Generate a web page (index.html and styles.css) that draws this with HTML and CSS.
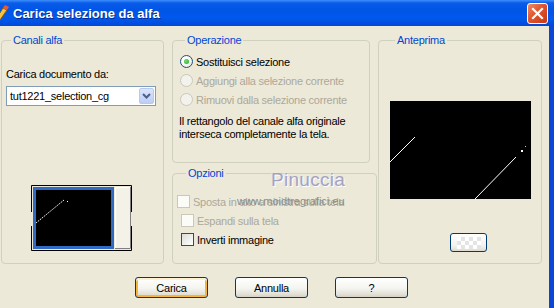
FILE: index.html
```html
<!DOCTYPE html>
<html lang="it">
<head>
    <meta charset="UTF-8">
    <title>Carica selezione da alfa</title>
    <link rel="stylesheet" href="styles.css">
</head>
<body>
    <div class="window">
        <div class="titlebar">
            <svg class="app-icon" width="16" height="16" viewBox="0 0 16 16">
                <path d="M2 14 L9 3 L13 5 L6 15 Z" fill="#f4c542" stroke="#8a5a10" stroke-width="1"/>
                <path d="M9 3 L11 0 L15 2 L13 5 Z" fill="#e85a3a"/>
                <circle cx="4" cy="12" r="2" fill="#5cb85c"/>
            </svg>
            <span class="title">Carica selezione da alfa</span>
            <div class="close-btn">
                <svg width="13" height="13" viewBox="0 0 13 13">
                    <path d="M2 2 L11 11 M11 2 L2 11" stroke="#fff" stroke-width="2.2" stroke-linecap="square"/>
                </svg>
            </div>
        </div>

        <div class="client">
            <div class="groups">
                <fieldset class="group group-channels">
                    <legend>Canali alfa</legend>
                    <div class="field-label">Carica documento da:</div>
                    <div class="combo">
                        <span class="combo-text">tut1221_selection_cg</span>
                        <span class="combo-btn">
                            <svg width="15" height="16" viewBox="0 0 15 16">
                                <path d="M4 6 L7.5 9.5 L11 6" fill="none" stroke="#4d6185" stroke-width="2"/>
                            </svg>
                        </span>
                    </div>
                    <svg class="thumb" width="102" height="66" viewBox="0 0 102 66">
                        <path d="M0.5 27 V0.5 H100.5 V27 M0.5 41 V65.5 H100.5 V41" fill="none" stroke="#000"/>
                        <path d="M98 27 H100 M98 41 H100" stroke="#000"/>
                        <rect x="2" y="2" width="81" height="62" fill="#316ac5"/>
                        <rect x="5" y="5" width="75" height="56" fill="#000"/>
                        <path d="M5 38 L33 15" stroke="#fff" stroke-width="1" stroke-dasharray="1.5 1"/>
                        <rect x="36" y="16" width="1" height="1" fill="#fff"/>
                        <rect x="84" y="2" width="16" height="62" fill="#f3f1e8"/>
                        <path d="M84.5 64 V2.5 H100" fill="none" stroke="#fff"/>
                        <path d="M84 63.5 H99.5 V2" fill="none" stroke="#808080"/>
                    </svg>
                </fieldset>

                <div class="middle-col">
                    <fieldset class="group group-op">
                        <legend>Operazione</legend>
                        <div class="option-row">
                            <span class="radio checked"></span>
                            <span>Sostituisci selezione</span>
                        </div>
                        <div class="option-row disabled">
                            <span class="radio"></span>
                            <span>Aggiungi alla selezione corrente</span>
                        </div>
                        <div class="option-row disabled">
                            <span class="radio"></span>
                            <span>Rimuovi dalla selezione corrente</span>
                        </div>
                        <p class="op-note">Il rettangolo del canale alfa originale interseca completamente la tela.</p>
                    </fieldset>

                    <fieldset class="group group-opts">
                        <legend>Opzioni</legend>
                        <div class="option-row disabled first-check">
                            <span class="check"></span>
                            <span>Sposta in alto a sinistra sulla tela</span>
                            <span class="watermark">Pinuccia</span>
                            <span class="watermark-url">www.moidtregrafici.eu</span>
                        </div>
                        <div class="option-row disabled">
                            <span class="check"></span>
                            <span>Espandi sulla tela</span>
                        </div>
                        <div class="option-row">
                            <span class="check"></span>
                            <span>Inverti immagine</span>
                        </div>
                    </fieldset>
                </div>

                <fieldset class="group group-preview">
                    <legend>Anteprima</legend>
                    <svg class="preview" width="141" height="98" viewBox="0 0 141 98">
                        <rect width="141" height="98" fill="#000"/>
                        <path d="M0 61 L25 36" stroke="#fff" stroke-width="1"/>
                        <path d="M85 98 L126 56" stroke="#fff" stroke-width="1"/>
                        <rect x="131" y="49" width="2" height="2" fill="#fff"/>
                        <rect x="135" y="45" width="1" height="1" fill="#ccc"/>
                    </svg>
                    <div class="bg-btn"><span class="checker"></span></div>
                </fieldset>
            </div>

            <div class="buttons">
                <button class="btn btn-default">Carica</button>
                <button class="btn">Annulla</button>
                <button class="btn">?</button>
            </div>
        </div>
    </div>
</body>
</html>
```

FILE: styles.css
```css
html, body {
    margin: 0;
    padding: 0;
}

body {
    width: 554px;
    height: 308px;
    overflow: hidden;
    background: #ece9d8;
    font-family: "Liberation Sans", Arial, sans-serif;
    font-size: 11px;
    color: #000;
}

.window {
    display: flex;
    flex-direction: column;
    height: 308px;
}

.titlebar {
    height: 26px;
    display: flex;
    align-items: center;
    background: linear-gradient(#3d8ffc 0, #0a5ce9 3px, #0055e5 10px, #0058ee 18px, #0049d9 26px);
}

.app-icon {
    margin-left: -6px;
    flex: none;
}

.title {
    margin-left: 3px;
    color: #fff;
    font-weight: bold;
    font-size: 13px;
    text-shadow: 1px 1px 0 #0a2a8a;
}

.close-btn {
    margin-left: auto;
    margin-right: 6px;
    width: 19px;
    height: 19px;
    border: 1px solid #fff;
    border-radius: 3px;
    background: linear-gradient(135deg, #f08a66 0%, #e0542d 45%, #c53a17 100%);
    display: flex;
    align-items: center;
    justify-content: center;
}

.client {
    flex: 1;
    width: 548px;
    border-right: 6px solid #0a47d6;
    padding: 8px 0 0 1px;
    box-sizing: content-box;
    letter-spacing: -0.25px;
}

.groups {
    display: flex;
    height: 230px;
}

.group {
    margin: 0;
    padding: 0;
    min-width: 0;
    border: 1px solid #d0d0bf;
    border-radius: 4px;
    box-sizing: border-box;
}

.group legend {
    margin-left: 5px;
    padding: 0 2px;
    line-height: 13px;
    color: #0046d5;
}

.group-channels {
    width: 163px;
    padding: 21px 0 0 4px;
}

.field-label {
    line-height: 13px;
}

.combo {
    margin-top: 5px;
    width: 150px;
    height: 20px;
    box-sizing: border-box;
    border: 1px solid #7f9db9;
    background: #fff;
    display: flex;
    align-items: center;
}

.combo-text {
    flex: 1;
    padding-left: 3px;
}

.combo-btn {
    width: 15px;
    height: 16px;
    margin-right: 1px;
    border-radius: 2px;
    background: linear-gradient(#dbe5fb, #bccdf6);
    border: 1px solid #b6c9f2;
    box-sizing: border-box;
    display: flex;
    align-items: center;
    justify-content: center;
}

.combo-btn svg {
    flex: none;
}

.thumb {
    display: block;
    margin: 79px 0 0 25px;
}

.middle-col {
    margin-left: 8px;
    width: 205px;
    display: flex;
    flex-direction: column;
}

.group-op {
    width: 198px;
    height: 129px;
    padding: 5px 0 0 7px;
}

.option-row {
    height: 19px;
    display: flex;
    align-items: center;
    gap: 3px;
}

.option-row.disabled {
    color: #aca899;
}

.radio {
    width: 13px;
    height: 13px;
    box-sizing: border-box;
    border-radius: 50%;
    border: 1px solid #cac8bb;
    background: #f3f2ec;
    flex: none;
    display: flex;
    align-items: center;
    justify-content: center;
}

.radio.checked {
    border-color: #1c5180;
    background: radial-gradient(circle at 35% 35%, #fff 30%, #dcdcd5 100%);
}

.radio.checked::after {
    content: "";
    width: 5px;
    height: 5px;
    border-radius: 50%;
    background: radial-gradient(circle at 40% 40%, #76e06f, #21a121);
}

.op-note {
    margin: 6px 0 0 -1px;
    line-height: 13px;
    width: 185px;
}

.group-opts {
    flex: 1;
    margin-top: 4px;
    padding: 12px 0 0 8px;
}

.check {
    width: 13px;
    height: 13px;
    box-sizing: border-box;
    border: 1px solid #1c5180;
    background: linear-gradient(135deg, #dcdcd7, #fff);
    flex: none;
}

.disabled .check {
    border-color: #cac8bb;
    background: #fbfbf8;
}

.first-check {
    position: relative;
    margin-left: -4px;
}

.watermark {
    position: absolute;
    left: 94px;
    top: -22px;
    font-family: "Liberation Sans", Arial, sans-serif;
    font-size: 19px;
    line-height: 20px;
    letter-spacing: 0.3px;
    color: #a3a3c0;
    text-shadow: 1px 1px 0 #fff, -1px 0 0 #e6e6ee;
}

.watermark-url {
    position: absolute;
    left: 60px;
    top: 0;
    line-height: 19px;
    color: #8d8d8d;
    letter-spacing: 0;
}

.group-preview {
    margin-left: 1px;
    width: 164px;
    padding: 54px 0 0 11px;
}

.preview {
    display: block;
}

.bg-btn {
    margin: 34px 0 0 60px;
    width: 37px;
    height: 19px;
    box-sizing: border-box;
    border: 1px solid #003c74;
    border-radius: 3px;
    background: linear-gradient(#fff, #f2f1ec 70%, #dedad0);
    display: flex;
    align-items: center;
    justify-content: center;
}

.checker {
    width: 24px;
    height: 12px;
    background: repeating-conic-gradient(#e4e4e4 0 25%, #fff 0 50%) 0 0 / 8px 8px;
}

.buttons {
    display: flex;
    gap: 27px;
    margin-top: 13px;
    padding-left: 134px;
}

.btn {
    width: 73px;
    height: 21px;
    padding: 0;
    border: 1px solid #003c74;
    border-radius: 3px;
    background: linear-gradient(#fff, #f4f4f0 55%, #e3e0d6 85%, #d6d0c5);
    font-family: "Liberation Sans", Arial, sans-serif;
    font-size: 11px;
    letter-spacing: -0.25px;
    color: #000;
}

.btn-default {
    box-shadow: inset 0 2px 0 #fff0cf, inset 0 0 0 2px #f5b43c, inset 0 -2px 0 #e5a01a;
}
```
